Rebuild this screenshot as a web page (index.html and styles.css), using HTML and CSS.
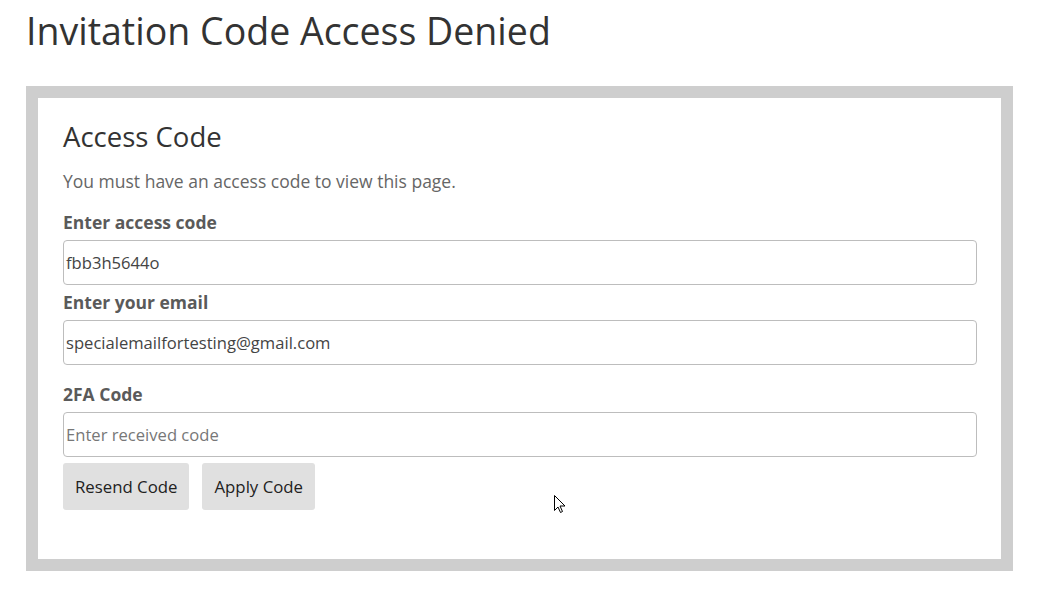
FILE: index.html
```html
<!DOCTYPE html>
<html>
<head>
<meta charset="utf-8">
<link rel="stylesheet" href="styles.css">
</head>
<body>
<h1 class="page-title">Invitation Code Access Denied</h1>
<div class="frame">
  <div class="panel">
    <h2 class="panel-title">Access Code</h2>
    <p class="intro">You must have an access code to view this page.</p>
    <div class="field">
      <label class="label">Enter access code</label>
      <div class="input">fbb3h5644o</div>
    </div>
    <div class="field">
      <label class="label">Enter your email</label>
      <div class="input">specialemailfortesting@gmail.com</div>
    </div>
    <div class="field field-2fa">
      <label class="label">2FA Code</label>
      <div class="input placeholder">Enter received code</div>
    </div>
    <div class="buttons">
      <button class="btn">Resend Code</button>
      <button class="btn">Apply Code</button>
    </div>
  </div>
</div>
<svg class="cursor" width="12" height="19" viewBox="0 0 12 19"><path d="M0.5 0.5 L0.5 15.5 L4 12 L6.5 17.5 L8.5 16.5 L6 11 L11 11 Z" fill="#fff" stroke="#000" stroke-width="1"/></svg>
</body>
</html>
```
FILE: styles.css
```css
html, body {
  margin: 0;
  padding: 0;
  background: #fff;
  font-family: "Open Sans", sans-serif;
}
body {
  padding: 0 26px;
  position: relative;
  width: 987px;
}
.page-title {
  margin: 0;
  padding-top: 6px;
  font-size: 37.5px;
  font-weight: 400;
  line-height: 50px;
  color: #333;
}
.frame {
  margin-top: 30px;
  border: 12px solid #cecece;
  background: #fff;
}
.panel {
  padding: 21px 24px 49px 25px;
}
.panel-title {
  margin: 0;
  font-size: 27.5px;
  font-weight: 400;
  line-height: 36px;
  color: #333;
}
.intro {
  margin: 13px 0 15px;
  font-size: 17.5px;
  line-height: 26px;
  color: #666;
}
.field + .field {
  margin-top: 4px;
}
.label {
  display: block;
  font-size: 17.5px;
  font-weight: 700;
  line-height: 26px;
  color: #5a5a5a;
  margin-bottom: 5px;
}
.input {
  box-sizing: border-box;
  height: 45px;
  border: 1px solid #bdbdbd;
  border-radius: 4px;
  padding: 0 2px;
  font-size: 16.6px;
  line-height: 43px;
  color: #444;
  background: #fff;
}
.placeholder {
  color: #777;
}
.field.field-2fa {
  margin-top: 16px;
}
.buttons {
  display: flex;
  gap: 13px;
  margin-top: 6px;
}
.btn {
  font-family: "Open Sans", sans-serif;
  font-size: 16.8px;
  color: #222;
  background: #e0e0e0;
  border: none;
  border-radius: 3px;
  height: 47px;
  padding: 0 12px;
}
.cursor {
  position: absolute;
  left: 554px;
  top: 495px;
}
```
